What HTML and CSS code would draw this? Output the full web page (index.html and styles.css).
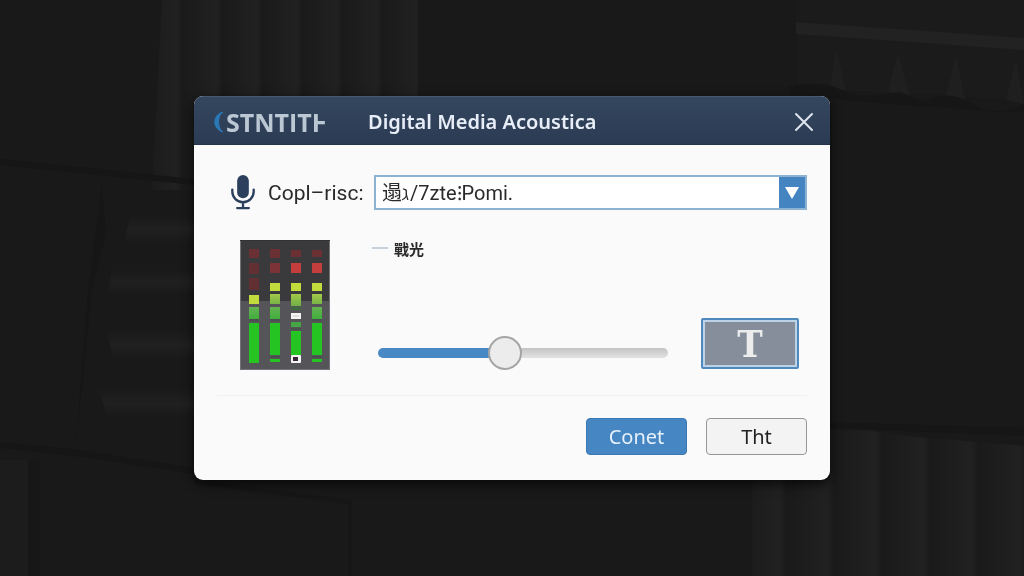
FILE: index.html
```html
<!DOCTYPE html>
<html lang="en">
<head>
    <meta charset="UTF-8">
    <meta name="viewport" content="width=device-width, initial-scale=1.0">
    <title>Digital Media Acoustica</title>
    <link rel="stylesheet" href="styles.css">
</head>
<body>
    <!-- Acoustic foam wall -->
    <svg class="backdrop" viewBox="0 0 1024 576" preserveAspectRatio="xMidYMid slice" aria-hidden="true">
        <defs>
            <linearGradient id="rib">
                <stop offset="0" stop-color="#1a1a1a"/>
                <stop offset="0.8" stop-color="#212121"/>
                <stop offset="1" stop-color="#191919"/>
            </linearGradient>
            <linearGradient id="ridge" x2="0" y2="1">
                <stop offset="0" stop-color="#191919"/>
                <stop offset="0.5" stop-color="#202020"/>
                <stop offset="1" stop-color="#191919"/>
            </linearGradient>
            <pattern id="ribs" width="40" height="300" patternUnits="userSpaceOnUse" x="184">
                <rect width="40" height="300" fill="url(#rib)"/>
            </pattern>
            <pattern id="ribsRight" width="48" height="600" patternUnits="userSpaceOnUse" x="836">
                <rect width="48" height="600" fill="url(#rib)"/>
            </pattern>
        </defs>
        <rect width="1024" height="576" fill="#191919"/>
        <path d="M162 0H418V190H152Z" fill="url(#ribs)"/>
        <path d="M796 0H1024V100L798 88Z" fill="#1b1b1b"/>
        <path d="M796 22L1024 38V50L796 34Z" fill="#222222"/>
        <path d="M836 48L846 90L830 88Z M898 52L910 96L888 92Z M956 54L966 104L946 96Z M1016 58L1024 104L1006 100Z" fill="#1f1f1f"/>
        <path d="M790 86Q824 80 842 90T900 92L924 102Q948 88 972 104T1024 104V112Q890 106 790 94Z" fill="#161616"/>
        <path d="M0 159L100 169L194 179V185L0 165Z" fill="#161616"/>
        <path d="M102 184L106 235L92 290L76 445L88 290Z" fill="#161616"/>
        <path d="M0 442L80 450L194 468V474L90 458L0 448Z" fill="#161616"/>
        <path d="M194 480L352 500V576H348V504L194 484Z" fill="#161616"/>
        <path d="M830 422L1024 428V436L830 428Z" fill="#161616"/>
        <path d="M130 216H200V244H124Z" fill="url(#ridge)"/>
        <path d="M112 270H200V294H108Z" fill="url(#ridge)"/>
        <path d="M106 330H200V360H114Z" fill="url(#ridge)"/>
        <path d="M98 388H200V418H108Z" fill="url(#ridge)"/>
        <path d="M752 480H830V430L865 430L915 437L955 440L1024 446V576H752Z" fill="url(#ribsRight)"/>
        <path d="M0 460H28V576H0Z" fill="#1c1c1c"/>
        <path d="M28 460H40V576H28Z" fill="#171717"/>
    </svg>

    <main class="dialog">
        <header class="titlebar">
            <div class="logo">
                <svg class="logo-arc" viewBox="0 0 11 22" aria-hidden="true">
                    <path d="M10 1C-1 4 -1 18 10 21C4 17 4 5 10 1Z" fill="#2a78b5" stroke="#2a78b5"/>
                </svg>
                <span>STNTITⱵ</span>
            </div>
            <h1>Digital Media Acoustica</h1>
            <button class="close" type="button" aria-label="Close">
                <svg viewBox="0 0 20 20" aria-hidden="true">
                    <path d="M2 2L18 18M18 2L2 18" stroke="#dfe5ee" stroke-width="2" stroke-linecap="round"/>
                </svg>
            </button>
        </header>

        <form class="content">
            <div class="field">
                <svg class="mic" viewBox="0 0 26 36" aria-hidden="true">
                    <rect x="7" y="0" width="12" height="24" rx="6" fill="#2c3f5c"/>
                    <path d="M2 15V17A11 11 0 0 0 24 17V15M13 28V34M7 34H19" fill="none" stroke="#2c3f5c" stroke-width="2.4" stroke-linecap="round"/>
                </svg>
                <label for="source">Copl–risc:</label>
                <div class="select">
                    <select id="source">
                        <option>遢ℷ/7zte⁝Pomi.</option>
                    </select>
                    <span class="arrow">
                        <svg viewBox="0 0 14 12" aria-hidden="true"><path d="M0 0H14L7 12Z" fill="#ffffff"/></svg>
                    </span>
                </div>
            </div>

            <div class="mixer">
                <svg class="meter" viewBox="0 0 90 130" role="img" aria-label="Level meter">
                    <defs>
                        <linearGradient id="lime" x2="0" y2="1">
                            <stop offset="0" stop-color="#a3c94a"/>
                            <stop offset="1" stop-color="#6fb045"/>
                        </linearGradient>
                        <linearGradient id="leaf" x2="0" y2="1">
                            <stop offset="0" stop-color="#66b352"/>
                            <stop offset="1" stop-color="#3fae3c"/>
                        </linearGradient>
                    </defs>
                    <rect width="90" height="130" fill="#3a393b"/>
                    <rect y="61" width="90" height="69" fill="#555559"/>
                    <rect x="0.5" y="0.5" width="89" height="129" fill="none" stroke="#737377"/>
                    <path d="M0 0.5H90" stroke="#333333"/>
                    <path d="M9 9h10v9h-10zM30 9h10v9h-10zM51 10h10v7h-10zM72 10h10v7h-10z" fill="#6a3033"/>
                    <path d="M9 23h10v11h-10zM9 38h10v12h-10z" fill="#623033"/>
                    <path d="M30 23h10v10h-10z" fill="#7b3337"/>
                    <path d="M51 23h10v10h-10zM72 23h10v10h-10z" fill="#c43e3e"/>
                    <path d="M9 55h10v9h-10zM30 43h10v8h-10zM51 43h10v8h-10zM72 43h10v8h-10z" fill="#c2dc3e"/>
                    <path d="M30 54h10v10h-10zM51 54h10v12h-10zM72 54h10v10h-10z" fill="url(#lime)"/>
                    <path d="M9 67h10v12h-10zM30 67h10v12h-10zM72 67h10v12h-10z" fill="url(#leaf)"/>
                    <path d="M51 67h10v3h-10z" fill="#3f6a40"/>
                    <path d="M51 82h10v5h-10z" fill="#45a544"/>
                    <path d="M9 80h10M30 80h10M72 80h10M51 89h10M30 117h10M72 117h10" stroke="#3f4a40"/>
                    <path d="M9 83h10v40h-10zM30 83h10v32h-10zM72 83h10v32h-10zM51 91h10v24h-10zM30 119h10v3h-10zM72 119h10v3h-10z" fill="#26c423"/>
                    <rect x="51" y="73" width="10" height="6" fill="#f3f3f3"/>
                    <path d="M53 76h6" stroke="#c8c8c8"/>
                    <rect x="51" y="115" width="10" height="8" rx="1" fill="#f3f3f3"/>
                    <rect x="53" y="117" width="5" height="4" fill="#3b2636"/>
                </svg>

                <div class="level">
                    <label for="level">戰光</label>
                    <input id="level" type="range" min="0" max="100" value="43">
                </div>

                <button class="text-tool" type="button">T</button>
            </div>

            <footer class="actions">
                <button class="btn btn-primary" type="button">Conet</button>
                <button class="btn" type="button">Tht</button>
            </footer>
        </form>
    </main>
</body>
</html>
```
FILE: styles.css
```css
* {
    box-sizing: border-box;
}
body {
    margin: 0;
    min-height: 100vh;
    display: grid;
    place-items: center;
    background: #191919;
    color: #2a2a2a;
    font-family: "Noto Sans", "Noto Sans CJK SC", sans-serif;
    font-size: 20px;
}
.backdrop {
    position: fixed;
    inset: 0;
    width: 100%;
    height: 100%;
    z-index: -1;
}
button, select {
    font: inherit;
    cursor: pointer;
}
.dialog {
    width: calc(100% - 388px);
    min-width: 600px;
    background: #fafafa;
    border-radius: 9px;
    overflow: hidden;
    box-shadow: 0 4px 12px rgba(0, 0, 0, 0.7);
}

/* Title bar */
.titlebar {
    display: flex;
    align-items: center;
    height: 49px;
    padding: 2px 16px 0 19px;
    background: linear-gradient(#34475f, #2b3b53);
    border-top: 1px solid #465a72;
    border-bottom: 1px solid #25344a;
}
.logo {
    display: flex;
    align-items: center;
    gap: 2px;
    width: 155px;
    color: #bcc7d4;
    font-family: "Open Sans", "Noto Sans", sans-serif;
    font-size: 25px;
    font-weight: bold;
}
.logo-arc {
    width: 11px;
    height: 22px;
}
.titlebar h1 {
    flex: 1;
    margin: 0;
    color: #e8eef7;
    font-size: 20px;
    font-weight: 600;
}
.close {
    display: flex;
    padding: 0;
    border: none;
    background: none;
}
.close svg {
    width: 20px;
    height: 20px;
}

/* Input source */
.content {
    padding: 30px 23px 25px;
}
.field {
    display: flex;
    align-items: center;
    padding-left: 13px;
}
.mic {
    width: 26px;
    height: 35px;
    margin-right: 12px;
}
.field label {
    width: 106px;
    font-family: Roboto, sans-serif;
    font-size: 21px;
}
.select {
    flex: 1;
    display: grid;
    grid-template-columns: 1fr 28px;
}
.select select {
    grid-area: 1 / 1 / 2 / 3;
    height: 35px;
    padding: 0 36px 0 6px;
    appearance: none;
    border: 2px solid #8db3d3;
    border-radius: 0;
    background: #ffffff;
    color: #2a2a2a;
    font-family: Roboto, "Noto Sans CJK SC", sans-serif;
}
.arrow {
    grid-area: 1 / 2;
    display: grid;
    place-items: center;
    margin: 2px 2px 2px 0;
    background: #4485c1;
    pointer-events: none;
}
.arrow svg {
    width: 14px;
    height: 12px;
}

/* Meter and level */
.mixer {
    display: flex;
    padding: 30px 8px 25px 23px;
}
.meter {
    width: 90px;
    height: 130px;
}
.level {
    flex: 1;
    display: flex;
    flex-direction: column;
    justify-content: space-between;
    padding: 0 33px 0 42px;
}
.level label {
    display: flex;
    align-items: center;
    gap: 6px;
    height: 16px;
    font-family: "Noto Sans CJK TC", sans-serif;
    font-size: 15px;
    font-weight: bold;
}
.level label::before {
    content: "";
    width: 16px;
    height: 2px;
    background: #c5d2de;
}
.level input {
    height: 34px;
    margin: 0 0 0 6px;
    appearance: none;
    background: none;
}
.level input::-webkit-slider-runnable-track {
    height: 10px;
    border-radius: 5px;
    background: linear-gradient(90deg, #4788c5 44%, transparent 44%), linear-gradient(#c4c4c4, #e2e2e2);
}
.level input::-webkit-slider-thumb {
    appearance: none;
    width: 34px;
    height: 34px;
    margin-top: -12px;
    border: 2px solid #a5a5a5;
    border-radius: 50%;
    background: #ececec;
}
.text-tool {
    align-self: flex-end;
    width: 98px;
    height: 51px;
    margin-bottom: 1px;
    padding: 0;
    border: 2px solid #5089bd;
    border-radius: 2px;
    background: #858e9a;
    box-shadow: inset 0 0 0 2px #bcd2e6;
    color: #ececec;
    font-family: "DejaVu Serif Condensed", "DejaVu Serif", serif;
    font-size: 38px;
    font-weight: bold;
    line-height: 1;
}

/* Footer buttons */
.actions {
    display: flex;
    justify-content: flex-end;
    gap: 19px;
    padding-top: 22px;
    border-top: 1px solid #f0f0f0;
}
.btn {
    width: 101px;
    height: 37px;
    padding: 0;
    border: 1px solid #969696;
    border-radius: 4px;
    background: #f3f3f3;
    color: #222222;
}
.btn-primary {
    border-color: #3b79b3;
    background: #4586c3;
    color: #e6f1fb;
}
```
